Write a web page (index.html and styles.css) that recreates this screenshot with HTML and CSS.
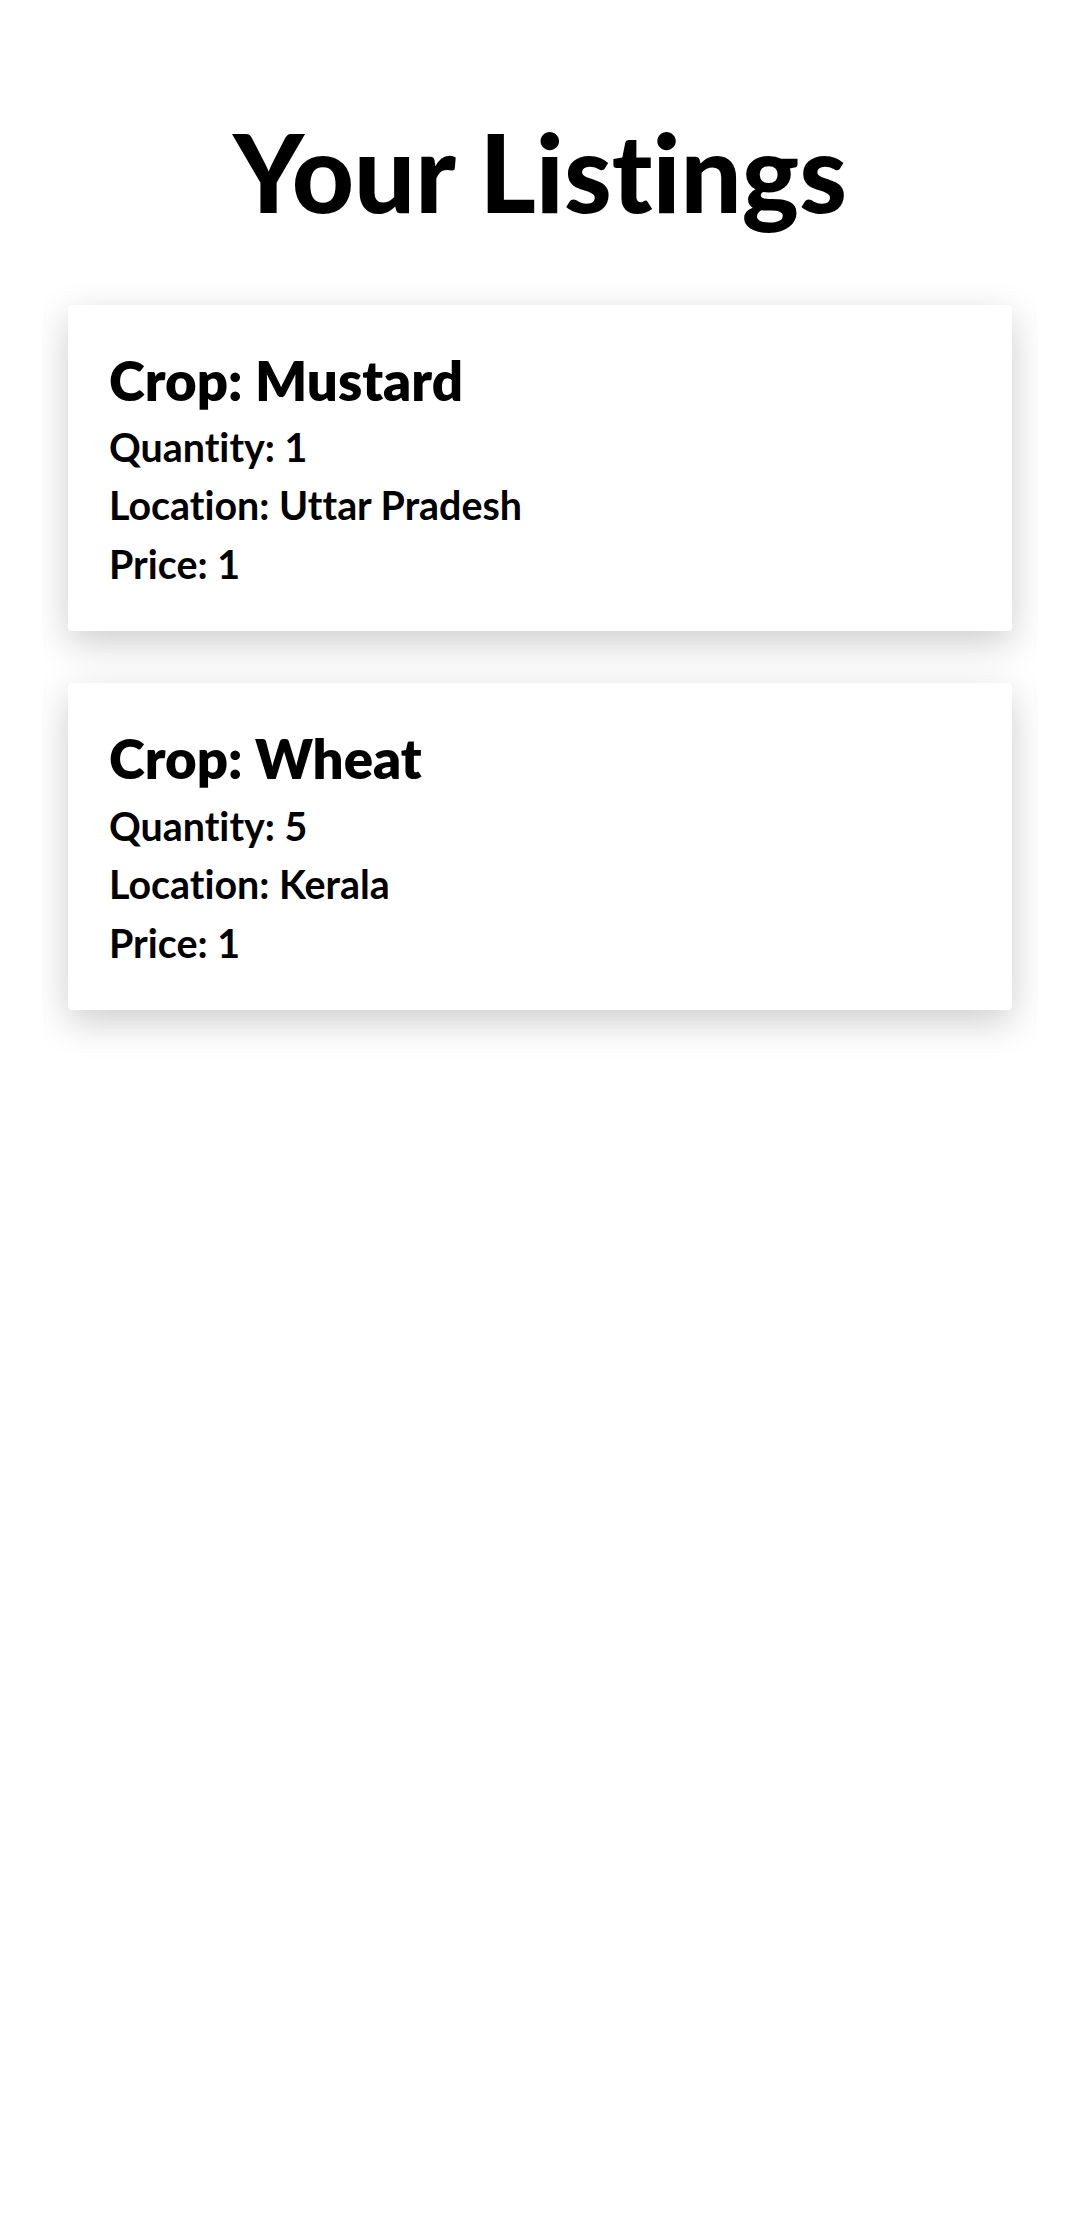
FILE: index.html
```html
<!DOCTYPE html>
<html lang="en">
<head>
<meta charset="utf-8">
<title>Your Listings</title>
<link rel="stylesheet" href="styles.css">
</head>
<body>
  <main class="page">
    <h1 class="page-title">Your Listings</h1>
    <section class="listings">
      <article class="card">
        <h2 class="card-title">Crop: Mustard</h2>
        <p class="card-line">Quantity: 1</p>
        <p class="card-line">Location: Uttar Pradesh</p>
        <p class="card-line">Price: 1</p>
      </article>
      <article class="card">
        <h2 class="card-title">Crop: Wheat</h2>
        <p class="card-line">Quantity: 5</p>
        <p class="card-line">Location: Kerala</p>
        <p class="card-line">Price: 1</p>
      </article>
    </section>
  </main>
</body>
</html>
```

FILE: styles.css
```css
html, body {
  margin: 0;
  padding: 0;
  background: #ffffff;
}

body {
  font-family: Lato, "Noto Sans", Arial, sans-serif;
  font-variant-ligatures: none;
  color: #000000;
}

.page {
  width: 1080px;
  min-height: 2217px;
}

.page-title {
  margin: 107px 0 0 0;
  font-size: 108px;
  line-height: 1.2;
  font-weight: 900;
  text-align: center;
}

.listings {
  margin: 0 42px;
  padding: 68px 26px 70px;
  overflow: hidden;
  display: flex;
  flex-direction: column;
  gap: 52px;
}

.card {
  background: #ffffff;
  border-radius: 4px;
  box-shadow: 0 12px 38px rgba(0, 0, 0, 0.2);
  padding: 43px 40px 38px 41px;
}

.card-title {
  margin: 0 0 5px 0;
  font-size: 54.5px;
  line-height: 1.2;
  font-weight: 800;
}

.card-line {
  margin: 0;
  font-size: 39.4px;
  line-height: 58.5px;
  font-weight: 700;
}
```
